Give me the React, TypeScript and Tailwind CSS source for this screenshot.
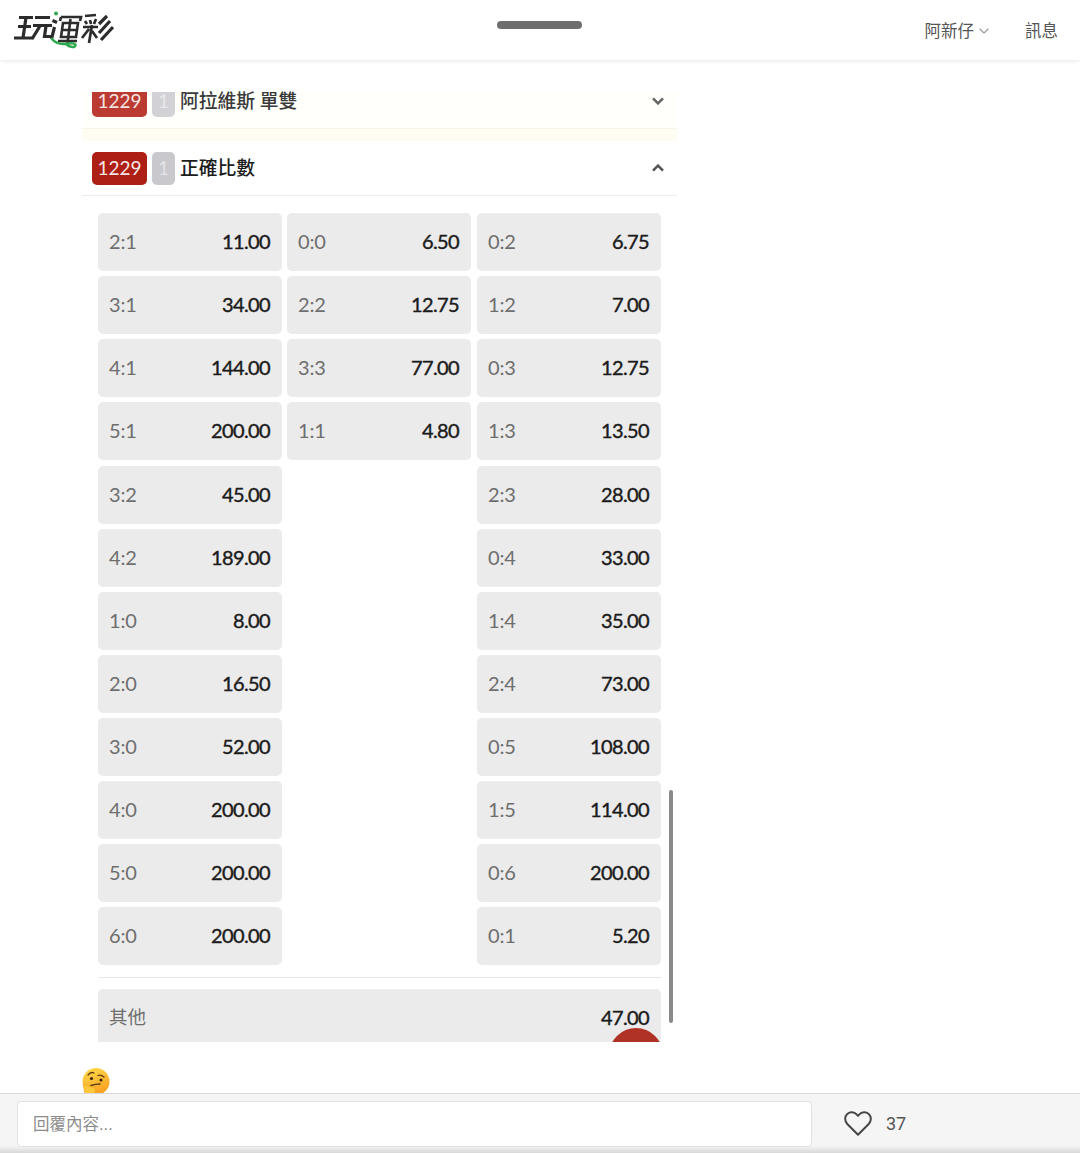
const left: [string, string][] = [
  ["2:1", "11.00"], ["3:1", "34.00"], ["4:1", "144.00"], ["5:1", "200.00"], ["3:2", "45.00"], ["4:2", "189.00"],
  ["1:0", "8.00"], ["2:0", "16.50"], ["3:0", "52.00"], ["4:0", "200.00"], ["5:0", "200.00"], ["6:0", "200.00"],
];
const mid: [string, string][] = [["0:0", "6.50"], ["2:2", "12.75"], ["3:3", "77.00"], ["1:1", "4.80"]];
const right: [string, string][] = [
  ["0:2", "6.75"], ["1:2", "7.00"], ["0:3", "12.75"], ["1:3", "13.50"], ["2:3", "28.00"], ["0:4", "33.00"],
  ["1:4", "35.00"], ["2:4", "73.00"], ["0:5", "108.00"], ["1:5", "114.00"], ["0:6", "200.00"], ["0:1", "5.20"],
];

function Tile({ k, v }: { k: string; v: string }) {
  return (
    <div className="flex h-[58px] items-center justify-between rounded-[5px] bg-[#ebebeb] pb-[2px] pl-[11px] pr-[12px] text-[20px]">
      <span className="tracking-[-0.2px] text-[#6e6e6e]">{k}</span>
      <span className="tracking-[-0.6px] text-[#1b1b1b] [-webkit-text-stroke:0.4px_#1b1b1b]">{v}</span>
    </div>
  );
}

function Column({ items, className }: { items: [string, string][]; className?: string }) {
  return (
    <div className={`flex w-[184px] flex-col gap-[5.14px] ${className ?? ""}`}>
      {items.map(([k, v]) => (
        <Tile key={k} k={k} v={v} />
      ))}
    </div>
  );
}

function Logo() {
  return (
    <svg width="100" height="38" viewBox="0 0 100 38" fill="none" className="shrink-0">
      <g stroke="#2c2c2c" strokeWidth="3.200">
        <path d="M5 6.500H19M4 15.500H17M0 27H19M12 6.500L9 27" />
        <path d="M21 6.500H36M19 14.500H38M26 15L18 28M32 15L30.500 25.500H37" />
        <path d="M38.500 9.500L43 11.500M40.500 16L37.500 28" />
        <path d="M47 6L46 10M47 6H67L66 10" strokeWidth="2.700" />
        <path d="M49 12H64L62 26H47ZM48 19H63M56.500 8L53.500 32M44 30H63" strokeWidth="2.600" />
        <path d="M71 5L82 4M71 10L73 13M76 9L77 13M82 8L80 13M69 16H84M78 14L75 32M75 18L68 27M78 20L83 27" strokeWidth="2.700" />
        <path d="M93 5L85 13M96 10L85 22M99 16L87 29" strokeWidth="3.200" />
      </g>
      <circle cx="42" cy="2.500" r="2" fill="#2fa84f" />
      <path d="M38 28C42 33 48 33.500 54 32.500C58 32 61 32 61.500 34C61.500 37 56 36.500 52.500 33.500" stroke="#2fa84f" strokeWidth="2.600" strokeLinecap="round" />
    </svg>
  );
}

function Thinking() {
  return (
    <svg width="28" height="28" viewBox="0 0 28 28" className="block">
      <defs>
        <linearGradient id="face" x1="0.3" y1="0" x2="0.7" y2="1">
          <stop offset="0" stopColor="#ffd84a" />
          <stop offset="1" stopColor="#f99c1e" />
        </linearGradient>
      </defs>
      <circle cx="14" cy="13.500" r="13.500" fill="url(#face)" />
      <path d="M6 7C8 4.500 10 4 12 5M16 7.500C18 6.800 20 7.300 22 9" stroke="#5a3a10" strokeWidth="1.300" fill="none" strokeLinecap="round" />
      <circle cx="9.500" cy="10.500" r="1.600" fill="#3f2a10" />
      <circle cx="19" cy="12" r="1.600" fill="#3f2a10" />
      <path d="M9 17.500C12 16.500 15 16 18 16" stroke="#5a3a10" strokeWidth="1.500" fill="none" strokeLinecap="round" />
      <path d="M1.500 16C5 18 10 18.500 14 21C14 24 11 25 10 28L3 28C3 24 1.500 20 1.500 16Z" fill="#ffc83a" stroke="#f0a020" strokeWidth="0.700" />
    </svg>
  );
}

export default function App() {
  return (
    <div className="flex h-screen flex-col overflow-hidden bg-white font-['Lato','Noto_Sans_CJK_TC',sans-serif]">
      <header className="relative z-10 flex h-[60px] shrink-0 items-center justify-between bg-white pl-[14px] pr-[22px] shadow-[0_1px_4px_rgba(0,0,0,0.1)]">
        <Logo />
        <div className="absolute left-[497px] top-[21px] h-[8px] w-[85px] rounded-full bg-[#6e6e6e]" />
        <div className="flex items-center pt-[2px] text-[16.5px] text-[#555]">
          <span>阿新仔</span>
          <svg width="10" height="6" viewBox="0 0 10 6" className="ml-[5px] mr-[36px]" fill="none">
            <path d="M0.500 0.800L5 5L9.500 0.800" stroke="#999" strokeWidth="1.200" />
          </svg>
          <span>訊息</span>
        </div>
      </header>

      <main className="min-h-0 flex-1 overflow-hidden pl-[82px] pt-[32px]">
        <div className="w-[595px]">
          <div className="flex h-[36px] items-start bg-[#fffffb] pl-[10px] pr-[13px]">
            <span className="flex h-[25px] w-[55px] items-center justify-center rounded-b-[5px] bg-[#bb3a31] pb-[8px] text-[19px] leading-none text-[#f6e4e2]">1229</span>
            <span className="ml-[5px] flex h-[25px] w-[23px] items-center justify-center rounded-b-[5px] bg-[#d2d2d6] pb-[8px] text-[19px] leading-none text-[#e9e9eb]">1</span>
            <span className="ml-[5px] text-[18.75px] font-medium leading-[18px] text-[#3a3a3a]">阿拉維斯 單雙</span>
            <svg width="12" height="8" viewBox="0 0 12 8" className="ml-auto mt-[5px]" fill="none">
              <path d="M1 1.300L6 6.300L11 1.300" stroke="#666" strokeWidth="2.600" />
            </svg>
          </div>
          <div className="h-[13px] border-t border-[#f8f5e6] bg-[#fffdf3]" />
          <div className="flex h-[55px] items-center border-b border-[#ececec] pl-[10px] pr-[13px]">
            <span className="flex h-[33px] w-[55px] items-center justify-center rounded-[5px] bg-[#ad1f14] text-[19px] text-[#f8e6e4]">1229</span>
            <span className="ml-[5px] flex h-[33px] w-[23px] items-center justify-center rounded-[5px] bg-[#c8c8cd] text-[19px] text-[#e4e4e6]">1</span>
            <span className="ml-[5px] text-[18.75px] font-medium text-[#1c1c1c]">正確比數</span>
            <svg width="12" height="8" viewBox="0 0 12 8" className="ml-auto" fill="none">
              <path d="M1 6.700L6 1.700L11 6.700" stroke="#555" strokeWidth="2.600" />
            </svg>
          </div>

          <div className="relative h-[846px] overflow-hidden px-[16px] pt-[17px]">
            <div className="grid grid-cols-[184px_184px_185px] gap-x-[5px]">
              <Column items={left} />
              <Column items={mid} />
              <Column items={right} className="ml-[1px]" />
            </div>
            <div className="mt-[12px] w-[563px] border-t border-[#e8e8e8] pt-[11px]">
              <div className="flex h-[58px] items-center justify-between rounded-[5px] bg-[#ebebeb] pb-[2px] pl-[11px] pr-[12px] text-[20px]">
                <span className="text-[18.5px] text-[#6e6e6e]">其他</span>
                <span className="tracking-[-0.6px] text-[#1b1b1b] [-webkit-text-stroke:0.4px_#1b1b1b]">47.00</span>
              </div>
            </div>
            <div className="absolute left-[527px] top-[832px] h-[54px] w-[54px] rounded-full bg-[#b03125]" />
            <div className="absolute left-[587px] top-[594px] h-[233px] w-[4px] rounded-full bg-[#8a8a8a]" />
          </div>
        </div>
        <div className="mt-[26px]">
          <Thinking />
        </div>
      </main>

      <footer className="relative z-10 flex h-[60px] shrink-0 items-start border-t border-[#d9d9d9] bg-gradient-to-b from-[#f5f5f5] from-88% to-[#d8d8d8] pl-[17px] pt-[7px]">
        <div className="flex h-[46px] w-[795px] items-center rounded-[4px] border border-[#e0e0e0] bg-white pl-[15px] font-['Liberation_Sans','Noto_Sans_CJK_TC',sans-serif] text-[16.5px] text-[#8c8c8c]">
          回覆內容...
        </div>
        <svg width="28" height="27" viewBox="0 0 30 28" fill="none" className="ml-[32px] mt-[9px]">
          <path d="M15 26L3.500 14.500C0.500 11.500 0.500 6.500 3.500 3.800C6.500 1.200 11 1.500 13.500 4.200L15 5.800L16.500 4.200C19 1.500 23.500 1.200 26.500 3.800C29.500 6.500 29.500 11.500 26.500 14.500Z" stroke="#444" strokeWidth="2.100" strokeLinejoin="round" />
        </svg>
        <span className="ml-[14px] mt-[9px] font-['Roboto',sans-serif] text-[18px] text-[#555]">37</span>
      </footer>
    </div>
  );
}
